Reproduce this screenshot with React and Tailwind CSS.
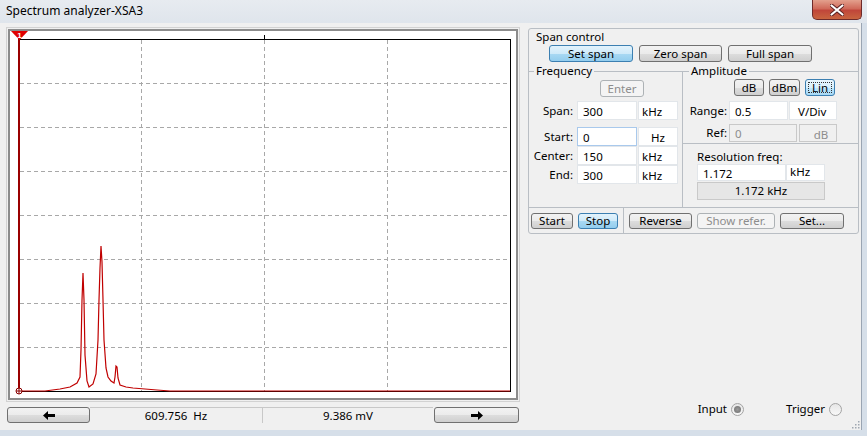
import React from 'react';

const font = "font-['Noto_Sans','DejaVu_Sans',sans-serif]";
const btn =
  'flex items-center justify-center leading-none border border-[#707070] rounded-[3px] bg-[linear-gradient(#f2f2f2,#ebebeb_50%,#dddddd_51%,#cfcfcf)] text-black';
const btnBlue =
  'flex items-center justify-center leading-none border border-[#3c7fb1] rounded-[3px] bg-[linear-gradient(#e3f3fc,#cfeaf9_50%,#a9d9f3_51%,#93cdee)] text-black';
const btnOff =
  'flex items-center justify-center leading-none border border-[#adb2b5] rounded-[3px] bg-[#f4f4f4] text-[#8d8d8d]';
const box = 'bg-white border border-[#e2e6ea] flex leading-none';

// rough trace of the spectrum, absolute screen coords
const trace = [
  [20, 391], [45, 391], [60, 389], [70, 387], [77, 383], [80, 377], [81, 350], [82, 300],
  [83, 273], [84, 300], [85, 355], [87, 381], [89, 387], [93, 384], [96, 374], [98, 340],
  [99, 300], [100, 268], [101, 246], [102, 262], [103, 300], [104, 340], [106, 368],
  [108, 377], [111, 381], [114, 383], [115, 377], [116, 366], [117, 367], [118, 378],
  [120, 385], [126, 387], [133, 388], [145, 389], [157, 390], [170, 391], [510, 391],
];

const Plot = () => {
  const vx = [141.5, 264.5, 387.5];
  const hy = [83.5, 127.5, 171.5, 215.5, 259.5, 303.5, 347.5];
  return (
    <svg width="506" height="367" viewBox="10 31 506 367" className="block">
      {vx.map(x => (
        <line key={x} x1={x} y1="40" x2={x} y2="391" stroke="#a8a8a8" strokeDasharray="4 3" />
      ))}
      {hy.map(y => (
        <line key={y} x1="20" y1={y} x2="510" y2={y} stroke="#a8a8a8" strokeDasharray="4 3" />
      ))}
      <line x1="264.5" y1="35" x2="264.5" y2="40" stroke="#000" />
      <rect x="19.5" y="39.5" width="491" height="352" fill="none" stroke="#000" />
      <polyline
        points={trace.map(p => p.join(',')).join(' ')}
        fill="none"
        stroke="#c00000"
        strokeWidth="1.2"
      />
      <line x1="19" y1="31" x2="19" y2="392" stroke="#9a0000" strokeWidth="2" />
      <polygon points="11,31 28,31 19.5,40" fill="#e00000" />
      <text x="19.5" y="37.5" fontSize="8" fontWeight="bold" fill="#fff" textAnchor="middle" fontFamily="Liberation Sans">1</text>
      <circle cx="19" cy="391" r="3" fill="#fff" stroke="#8a0000" />
      <line x1="16" y1="391" x2="22" y2="391" stroke="#8a0000" />
      <line x1="19" y1="388" x2="19" y2="394" stroke="#8a0000" />
    </svg>
  );
};

const Arrow = ({ dir }) => (
  <svg width="12" height="9" viewBox="0 0 12 9">
    {dir === 'left' ? (
      <path d="M0 4.5 L5 0 V3 H12 V6 H5 V9 Z" fill="#000" />
    ) : (
      <path d="M12 4.5 L7 0 V3 H0 V6 H7 V9 Z" fill="#000" />
    )}
  </svg>
);

const Row = ({ label, value, unit, lw = 'w-[44px]', iw, uw, gap = 'ml-[4px]', focus, center }) => (
  <div className="flex items-stretch h-[19px]">
    <span className={`${lw} text-right flex items-center justify-end`}>{label}</span>
    <div
      className={`${gap} ${iw} flex items-center pl-[5px] pt-[2px] border ${
        focus ? 'bg-white border-[#a9c9ec]' : 'bg-white border-[#e2e6ea]'
      }`}
    >
      {value}
    </div>
    <div
      className={`ml-px ${uw} flex items-start pt-[1px] border bg-white border-[#e2e6ea] ${center ? 'justify-center' : 'pl-[3px]'}`}
    >
      {unit}
    </div>
  </div>
);

const Radio = ({ on }) => (
  <span className="w-[13px] h-[13px] rounded-full border border-[#a3a3a3] bg-[linear-gradient(#e6e6e6,#f8f8f8)] flex items-center justify-center">
    {on && <span className="w-[7px] h-[7px] rounded-full bg-[radial-gradient(#9a9a9a,#6e6e6e)]" />}
  </span>
);

export default function App() {
  return (
    <div className={`w-[867px] h-[436px] bg-[#d6dfe9] flex flex-col overflow-hidden text-[11.5px] text-black ${font}`}>
      {/* title bar */}
      <div className="h-[23px] flex bg-[linear-gradient(#e7ebf0,#dfe5ec)] shrink-0">
        <span className="pl-[6px] pt-[3px] text-[12px] leading-[16px]">Spectrum analyzer-XSA3</span>
        <div className="ml-auto mr-[5px] w-[50px] h-[20px] rounded-b-[5px] border border-t-0 border-[#6e2a2a] bg-[linear-gradient(#e3a08d,#d06a5a_45%,#c0463a_55%,#c8643f)] flex items-center justify-center">
          <svg width="14" height="12" viewBox="0 0 14 12">
            <path d="M1 1 L13 11 M13 1 L1 11" stroke="#5a2020" strokeWidth="4" strokeLinecap="round" />
            <path d="M1.5 1.5 L12.5 10.5 M12.5 1.5 L1.5 10.5" stroke="#fff" strokeWidth="2.2" strokeLinecap="round" />
          </svg>
        </div>
      </div>

      {/* body */}
      <div className="flex-1 flex bg-[#f0f0f0] mr-[5px] border-r border-[#9aa5b3] mb-[6px] relative">
        {/* left: display */}
        <div className="pl-[6px] pt-[4px] w-[520px] flex flex-col">
          <div className="w-[514px] h-[375px] border border-[#d2d2d2] p-px">
            <div className="w-full h-full border-2 border-[#8c8c8c] bg-white">
              <Plot />
            </div>
          </div>
          <div className="mt-[5px] h-[16px] flex">
            <div className={`${btn} ml-px w-[83px]`}>
              <Arrow dir="left" />
            </div>
            <div className="w-[172px] flex items-center justify-center border-t border-[#c8c8c8] leading-none">609.756&nbsp; Hz</div>
            <div className="w-[171px] flex items-center justify-center border-t border-l border-[#c8c8c8] leading-none">9.386 mV</div>
            <div className={`${btn} ml-px w-[85px]`}>
              <Arrow dir="right" />
            </div>
          </div>
        </div>

        {/* right: controls */}
        <div className="ml-[8px] pt-[5px] w-[331px] flex flex-col">
          <div className="h-[206px] border border-[#b9bec4] rounded-[3px] flex flex-col">
            <div className="h-[15px] pl-[7px] leading-[15px]">Span control</div>
            <div className="mt-px h-[17px] flex pl-[20px] gap-[6px]">
              <div className={`${btnBlue} w-[84px]`}>Set span</div>
              <div className={`${btn} w-[83px]`}>Zero span</div>
              <div className={`${btn} w-[84px]`}>Full span</div>
            </div>

            <div className="mt-[2px] h-[144px] flex border-b border-[#b9bec4]">
              <fieldset className="w-[154px] border-t border-r border-[#b9bec4] min-w-0">
                <legend className="ml-[5px] px-[2px] leading-[14px]">Frequency</legend>
                <div className={`${btnOff} mt-[2px] ml-[71px] w-[44px] h-[17px]`}>Enter</div>
                <div className="mt-[4px] flex flex-col">
                  <Row label="Span:" value="300" unit="kHz" iw="w-[60px]" uw="w-[40px]" />
                  <div className="h-[7px]" />
                  <Row label="Start:" value="0" unit="Hz" iw="w-[60px]" uw="w-[40px]" focus center />
                  <Row label="Center:" value="150" unit="kHz" iw="w-[60px]" uw="w-[40px]" />
                  <Row label="End:" value="300" unit="kHz" iw="w-[60px]" uw="w-[40px]" />
                </div>
              </fieldset>

              <div className="flex-1 flex flex-col">
                <fieldset className="h-[79px] border-t border-[#b9bec4] min-w-0">
                  <legend className="ml-[6px] px-[2px] leading-[14px]">Amplitude</legend>
                  <div className="mt-px h-[17px] flex justify-end pr-[23px] gap-[5px]">
                    <div className={`${btn} w-[30px]`}>dB</div>
                    <div className={`${btn} w-[31px]`}>dBm</div>
                    <div className="w-[30px] flex items-center justify-center border border-[#3c7fb1] rounded-[3px] bg-[linear-gradient(#eaf6fd,#d9f0fc_50%,#bee6fd_51%,#a7d9f5)] p-[2px]">
                      <span className="w-full h-full flex items-center justify-center border border-dotted border-[#333] leading-none">Lin</span>
                    </div>
                  </div>
                  <div className="mt-[5px] flex flex-col">
                    <Row label="Range:" value="0.5" unit="V/Div" gap="ml-[2px]" iw="w-[59px]" uw="w-[48px] !pl-[8px]" />
                    <div className="h-[4px]" />
                    <div className="flex items-stretch h-[18px]">
                      <span className="w-[44px] flex items-center justify-end">Ref:</span>
                      <div className="ml-[2px] w-[68px] flex items-center pl-[5px] pt-[1px] border bg-[#f0f0f0] border-[#c9c9c9] text-[#8d8d8d]">0</div>
                      <div className="ml-[2px] w-[38px] flex items-start pt-[1px] justify-center pl-[6px] border bg-[#f0f0f0] border-[#c9c9c9] text-[#8d8d8d]">dB</div>
                    </div>
                  </div>
                </fieldset>
                <div className="flex-1 border-t border-[#b9bec4] pl-[14px]">
                  <div className="pt-[6px] leading-[14px]">Resolution freq:</div>
                  <div className="flex h-[17px]">
                    <div className={`${box} w-[89px] items-center pl-[5px] pt-[2px]`}>1.172</div>
                    <div className={`${box} w-[39px] items-start pl-[3px] pt-[1px]`}>kHz</div>
                  </div>
                  <div className="mt-px w-[128px] h-[18px] bg-[#e6e6e6] border border-[#c9c9c9] flex items-center justify-center leading-none">
                    1.172 kHz
                  </div>
                </div>
              </div>
            </div>

            <div className="h-[25px] flex">
              <div className="w-[95px] border-r border-[#b9bec4] flex items-center">
                <div className={`${btn} ml-[2px] w-[42px] h-[16px]`}>Start</div>
                <div className={`${btnBlue} ml-[5px] w-[40px] h-[16px]`}>Stop</div>
              </div>
              <div className="flex items-center">
                <div className={`${btn} ml-[5px] w-[63px] h-[16px]`}>Reverse</div>
                <div className={`${btnOff} ml-[5px] w-[78px] h-[16px]`}>Show refer.</div>
                <div className={`${btn} ml-[5px] w-[64px] h-[16px]`}>Set...</div>
              </div>
            </div>
          </div>

          <div className="mt-[168px] h-[14px] flex items-center">
            <span className="w-[199px] text-right leading-none">Input</span>
            <span className="ml-[4px]"><Radio on /></span>
            <span className="w-[81px] text-right leading-none">Trigger</span>
            <span className="ml-[4px]"><Radio /></span>
          </div>
        </div>

        {/* size grip */}
        <svg width="10" height="10" viewBox="0 0 10 10" className="absolute right-[1px] bottom-[1px]">
          {[[8, 2], [8, 5], [8, 8], [5, 5], [5, 8], [2, 8]].map(([x, y]) => (
            <rect key={`${x}-${y}`} x={x} y={y} width="1.5" height="1.5" fill="#a0a8b2" />
          ))}
        </svg>
      </div>
    </div>
  );
}
